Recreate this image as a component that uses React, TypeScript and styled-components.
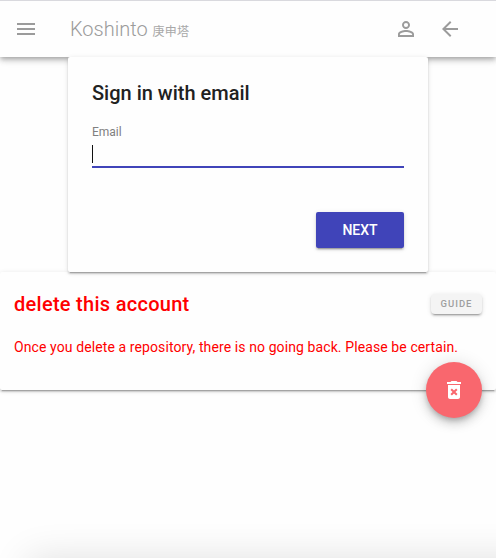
import React from "react";
import styled, { createGlobalStyle } from "styled-components";

const GlobalStyle = createGlobalStyle`
  html, body { margin: 0; background: #fefefe; overflow: hidden; }
  * { box-sizing: border-box; }
  body { font-family: Roboto, "Noto Sans CJK JP", sans-serif; -webkit-font-smoothing: antialiased; }
`;

const cardShadow =
  "0 3px 1px -2px rgba(0,0,0,.2), 0 2px 2px 0 rgba(0,0,0,.14), 0 1px 5px 0 rgba(0,0,0,.12)";

const Page = styled.div`
  position: relative;
  display: flex;
  flex-direction: column;
  width: 100%;
  height: 558px;
  overflow: hidden;
`;

const AppBar = styled.header`
  display: flex;
  align-items: center;
  flex: none;
  height: 57px;
  padding: 0 34px 0 14px;
  border-top: 1px solid #d9d9de;
  background: #fefefe;
  color: #9b9b9b;
  box-shadow: 0 2px 4px -1px rgba(0,0,0,.2), 0 4px 5px 0 rgba(0,0,0,.14), 0 1px 10px 0 rgba(0,0,0,.12);
`;

const IconButton = styled.button`
  display: flex;
  padding: 0;
  border: 0;
  background: none;
  color: inherit;
`;

const Icon = styled.svg`
  display: block;
  width: 24px;
  height: 24px;
  fill: currentColor;
`;

const Brand = styled.h1`
  flex: 1;
  margin: 0 0 0 32px;
  font-size: 20px;
  line-height: 28px;
  font-weight: 300;
  letter-spacing: 0;
  white-space: nowrap;
`;

const BrandNote = styled.small`
  font-family: "Noto Sans CJK JP", sans-serif;
  font-size: 12px;
  line-height: 1;
  font-weight: 400;
  color: #a8a8a8;
  letter-spacing: 0.25px;
`;

const Actions = styled.div`
  display: flex;
  gap: 20px;
`;

const SignInCard = styled.form`
  position: relative;
  z-index: 1;
  display: flex;
  flex-direction: column;
  flex: none;
  width: 360px;
  height: 215px;
  margin: 0 auto;
  padding: 24px;
  border-radius: 2px;
  background: #fefefe;
  box-shadow: ${cardShadow};
`;

const CardTitle = styled.h2`
  margin: 0;
  font-size: 20px;
  line-height: 24px;
  font-weight: 500;
  color: #212121;
`;

const Label = styled.label`
  margin-top: 20px;
  font-size: 12px;
  line-height: 14px;
  color: #808080;
`;

const Field = styled.div`
  display: flex;
  height: 29px;
  padding-top: 6px;
  border-bottom: 2px solid #4044b9;
`;

const Caret = styled.span`
  width: 1px;
  height: 18px;
  background: #111;
`;

const NextButton = styled.button`
  align-self: flex-end;
  width: 88px;
  height: 36px;
  margin-top: 44px;
  padding: 0;
  border: 0;
  border-radius: 2px;
  background: #4044b9;
  color: #fff;
  font: 500 14px/36px Roboto, sans-serif;
  box-shadow: ${cardShadow};
`;

const DangerCard = styled.section`
  flex: none;
  height: 118px;
  padding: 18px 14px 0;
  border-radius: 2px;
  background: #fefefe;
  color: #ff0000;
  box-shadow: ${cardShadow};
`;

const DangerHead = styled.div`
  display: flex;
  align-items: center;
  justify-content: space-between;
  height: 28px;
`;

const DangerTitle = styled.h2`
  margin: 0;
  font-size: 20px;
  line-height: 28px;
  font-weight: 500;
  letter-spacing: 0.28px;
`;

const GuideButton = styled.button`
  width: 51px;
  height: 20px;
  padding: 0;
  border: 0;
  border-radius: 4px;
  background: #f4f4f4;
  color: #9e9e9e;
  font: 500 9.5px/20px Roboto, sans-serif;
  letter-spacing: 1px;
  box-shadow: ${cardShadow};
`;

const DangerText = styled.p`
  margin: 19px 0 0;
  font-size: 14px;
  line-height: 20px;
  letter-spacing: 0.1px;
  white-space: nowrap;
`;

const DeleteFab = styled.button`
  position: absolute;
  right: 14px;
  top: 362px;
  display: flex;
  align-items: center;
  justify-content: center;
  width: 56px;
  height: 56px;
  padding: 0;
  border: 0;
  border-radius: 50%;
  background: #f9676e;
  color: #fff;
  box-shadow: 0 3px 5px -1px rgba(0,0,0,.2), 0 6px 10px 0 rgba(0,0,0,.14), 0 1px 18px 0 rgba(0,0,0,.12);
`;

const BottomSheet = styled.div`
  position: absolute;
  left: 28px;
  right: -60px;
  top: 558px;
  height: 80px;
  box-shadow: 0 0 38px rgba(0,0,0,.12);
`;

export default function App() {
  return (
    <>
      <GlobalStyle />
      <Page>
        <AppBar>
          <IconButton aria-label="Menu">
            <Icon viewBox="0 0 24 24">
              <path d="M3 18h18v-2H3v2zm0-5h18v-2H3v2zm0-7v2h18V6H3z" />
            </Icon>
          </IconButton>
          <Brand>
            Koshinto <BrandNote>庚申塔</BrandNote>
          </Brand>
          <Actions>
            <IconButton aria-label="Account">
              <Icon viewBox="0 0 24 24">
                <path d="M12 5.9a2.1 2.1 0 1 1 0 4.2 2.1 2.1 0 0 1 0-4.2m0 9c2.97 0 6.1 1.46 6.1 2.1v1.1H5.9V17c0-.64 3.13-2.1 6.1-2.1M12 4C9.79 4 8 5.79 8 8s1.79 4 4 4 4-1.79 4-4-1.79-4-4-4zm0 9c-2.67 0-8 1.34-8 4v3h16v-3c0-2.66-5.33-4-8-4z" />
              </Icon>
            </IconButton>
            <IconButton aria-label="Back">
              <Icon viewBox="0 0 24 24">
                <path d="M20 11H7.83l5.59-5.59L12 4l-8 8 8 8 1.41-1.41L7.83 13H20v-2z" />
              </Icon>
            </IconButton>
          </Actions>
        </AppBar>
        <SignInCard>
          <CardTitle>Sign in with email</CardTitle>
          <Label>Email</Label>
          <Field>
            <Caret />
          </Field>
          <NextButton type="button">NEXT</NextButton>
        </SignInCard>
        <DangerCard>
          <DangerHead>
            <DangerTitle>delete this account</DangerTitle>
            <GuideButton>GUIDE</GuideButton>
          </DangerHead>
          <DangerText>
            Once you delete a repository, there is no going back. Please be certain.
          </DangerText>
        </DangerCard>
        <DeleteFab aria-label="Delete account">
          <Icon viewBox="0 0 24 24">
            <path d="M6 19c0 1.1.9 2 2 2h8c1.100 0 2-.9 2-2V7H6v12zm2.460-7.120l1.410-1.410L12 12.590l2.120-2.120 1.410 1.410L13.410 14l2.120 2.120-1.410 1.410L12 15.410l-2.120 2.120-1.410-1.410L10.590 14l-2.130-2.120zM15.500 4l-1-1h-5l-1 1H5v2h14V4z" />
          </Icon>
        </DeleteFab>
        <BottomSheet />
      </Page>
    </>
  );
}
